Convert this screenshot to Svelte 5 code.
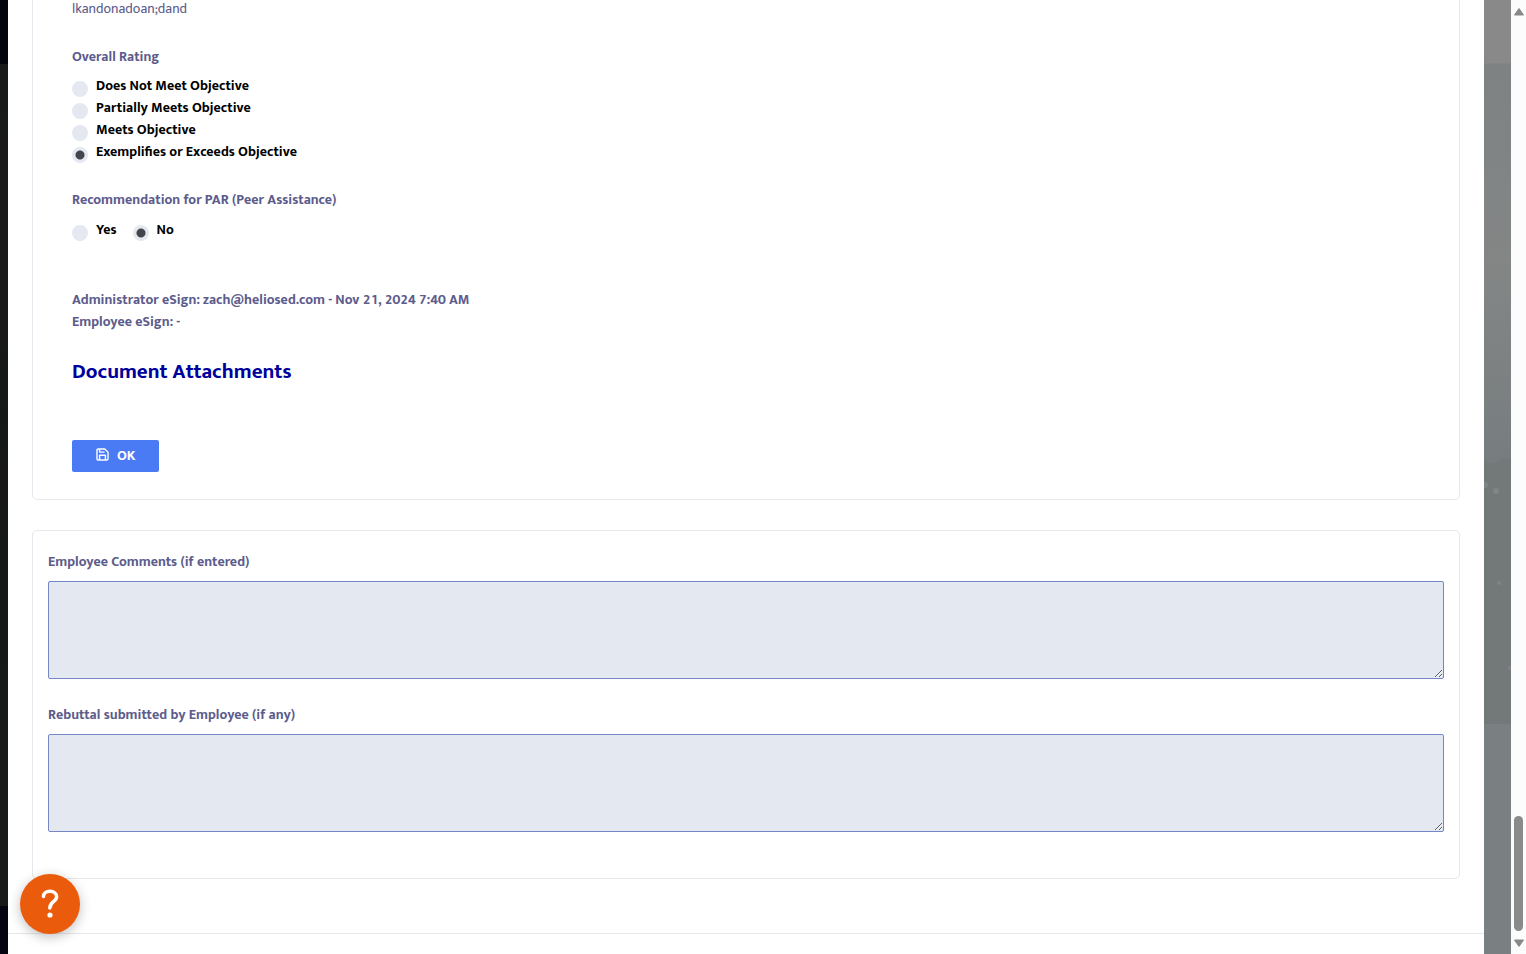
<script>
  const RATINGS = [
    'Does Not Meet Objective',
    'Partially Meets Objective',
    'Meets Objective',
    'Exemplifies or Exceeds Objective'
  ]

  let rating = $state('Exemplifies or Exceeds Objective')
  let par = $state('No')
  let comments = $state('')
  let rebuttal = $state('')
</script>

<div class="page">
  <div class="nav-strip"></div>

  <main class="modal">
    <div class="body">
      <form class="card review" onsubmit={(e) => e.preventDefault()}>
        <p class="answer">lkandonadoan;dand</p>

        <fieldset class="ratings">
          <legend>Overall Rating</legend>
          {#each RATINGS as r}
            <label class="option">
              <input type="radio" name="rating" value={r} bind:group={rating} />
              {r}
            </label>
          {/each}
        </fieldset>

        <fieldset class="par">
          <legend>Recommendation for PAR (Peer Assistance)</legend>
          <div class="inline">
            {#each ['Yes', 'No'] as p}
              <label class="option">
                <input type="radio" name="par" value={p} bind:group={par} />
                {p}
              </label>
            {/each}
          </div>
        </fieldset>

        <div class="signatures">
          <div>Administrator eSign: zach@heliosed.com - Nov 21, 2024 7:40 AM</div>
          <div>Employee eSign: -</div>
        </div>

        <h2>Document Attachments</h2>

        <button class="ok" type="submit">
          <svg width="13" height="16" viewBox="0 0 13 16" fill="none" stroke="currentColor" stroke-width="1.4" stroke-linejoin="round">
            <path d="M2.2 1h6.600L12 4.200v6.600c0 .7-.5 1.200-1.200 1.200H2.200C1.500 12 1 11.500 1 10.800V2.200C1 1.500 1.500 1 2.200 1z" />
            <path d="M3.600 1.200v2.900h5M3.600 11.800V7.300h5.800v4.500" />
          </svg>
          OK
        </button>
      </form>

      <section class="card feedback">
        <label for="comments">Employee Comments (if entered)</label>
        <textarea id="comments" bind:value={comments}></textarea>
        <label for="rebuttal">Rebuttal submitted by Employee (if any)</label>
        <textarea id="rebuttal" bind:value={rebuttal}></textarea>
      </section>
    </div>
    <div class="footer"></div>
  </main>

  <div class="backdrop">
    <svg width="27" height="954" viewBox="0 0 27 954" aria-hidden="true">
      <path d="M0 459q8 8 15 2q6-3 12-2v495H0z" fill="#737879" />
      <path d="M0 724h27v230H0z" fill="#7a8082" />
      <g fill="#7f8486">
        <circle cx="1" cy="485" r="3" />
        <circle cx="12" cy="491" r="3" />
        <circle cx="15" cy="583" r="2" />
        <circle cx="26" cy="668" r="2" />
      </g>
    </svg>
  </div>
  <div class="scrollbar">
    <svg width="10" height="8" viewBox="0 0 10 8"><path d="M5 0.500L9.500 7H0.500z" fill="#888" stroke="#888" stroke-linejoin="round" /></svg>
    <div class="thumb"></div>
    <svg width="10" height="8" viewBox="0 0 10 8"><path d="M5 7.500L9.500 1H0.500z" fill="#888" stroke="#888" stroke-linejoin="round" /></svg>
  </div>
</div>

<button class="help" aria-label="Help">
  <svg width="60" height="60" viewBox="0 0 60 60" fill="none">
    <path d="M23.500 22.500c0-3.200 2.800-5.200 6.500-5.200s6.600 2.200 6.600 5.400c0 5-6.800 5-6.800 11.200" stroke="#fff" stroke-width="3.500" stroke-linecap="round" />
    <circle cx="30" cy="41" r="2.600" fill="#fff" />
  </svg>
</button>

<style>
  :global(body) {
    margin: 0;
    overflow: hidden;
  }
  .page {
    display: flex;
    min-height: 100vh;
    font: 700 14px/22px Mukta, 'Noto Sans', sans-serif;
    font-variant-numeric: tabular-nums;
    color: #5c5c8c;
  }
  .nav-strip {
    flex: 0 0 8px;
    background: linear-gradient(#03050d 64px, #181a19 64px, #191919 320px, #141918 420px, #181818 480px, #151918 560px, #181a18 906px, #050511 906px);
  }
  .modal {
    flex: 1;
    display: flex;
    flex-direction: column;
    background: #fff;
    border-radius: 0 0 4px 4px;
  }
  .body {
    padding: 0 24px 54px;
  }
  .card {
    border: 1px solid #e7e8ed;
    border-radius: 5px;
  }
  .review {
    border-top: 0;
    border-radius: 0 0 5px 5px;
    padding: 0 39px 27px;
  }
  .answer {
    margin: 0 0 28px;
    font-weight: 400;
    line-height: 18px;
  }
  fieldset {
    border: 0;
    margin: 0;
    padding: 0;
  }
  legend {
    padding: 0 0 7px;
  }
  .ratings {
    margin-bottom: 26px;
  }
  .par {
    margin-bottom: 48px;
  }
  .inline {
    display: flex;
    gap: 16px;
    padding-top: 1px;
  }
  .option {
    display: flex;
    gap: 8px;
    color: #000;
  }
  input {
    appearance: none;
    flex: none;
    width: 16px;
    height: 16px;
    margin: 6px 0 0;
    border-radius: 50%;
    background: #e4e8f0;
  }
  input:checked {
    background: radial-gradient(circle, #43454a 4px, #e4e8f0 5px);
  }
  h2 {
    margin: 27px 0 56px;
    font-size: 21px;
    font-weight: 700;
    line-height: 24px;
    color: #00009c;
  }
  .ok {
    display: flex;
    align-items: center;
    gap: 8px;
    height: 32px;
    padding: 0 24px;
    border: 0;
    border-radius: 2px;
    background: #4a7bf4;
    color: #fff;
    font: inherit;
  }
  .feedback {
    display: flex;
    flex-direction: column;
    margin-top: 30px;
    padding: 20px 15px 21px;
  }
  textarea {
    box-sizing: border-box;
    height: 98px;
    margin: 8px 0 25px;
    border: 1px solid #7587c5;
    border-radius: 2px;
    background: #e4e8f0;
    font: inherit;
    resize: vertical;
  }
  .footer {
    flex: 1;
    border-top: 1px solid #e7e8ed;
  }
  .backdrop {
    flex: 0 0 27px;
    background: linear-gradient(#898989 63px, #7e8283 64px, #848686 260px, #777d7f 459px, #7a8082);
  }
  .backdrop svg {
    display: block;
  }
  .scrollbar {
    box-sizing: border-box;
    flex: 0 0 15px;
    display: flex;
    flex-direction: column;
    align-items: center;
    gap: 8px;
    padding: 8px 0 7px;
    background: #fcfcfd;
  }
  .thumb {
    width: 9px;
    height: 115px;
    margin-top: auto;
    border-radius: 5px;
    background: #8a8a8a;
  }
  .help {
    position: fixed;
    left: 20px;
    bottom: 20px;
    width: 60px;
    height: 60px;
    padding: 0;
    border: 0;
    border-radius: 50%;
    background: #eb5b0c;
    box-shadow: 0 3px 12px rgba(0, 0, 0, 0.25);
  }
  .help svg {
    display: block;
  }
</style>
